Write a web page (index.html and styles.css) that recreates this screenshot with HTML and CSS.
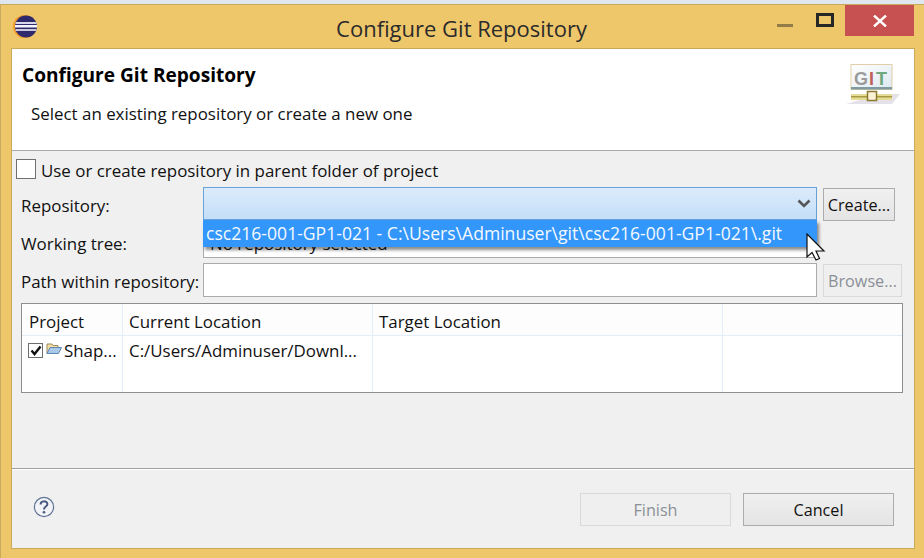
FILE: index.html
```html
<!DOCTYPE html>
<html lang="en">
<head>
<meta charset="utf-8">
<title>Configure Git Repository</title>
<link rel="stylesheet" href="styles.css">
</head>
<body>
<div class="window">
  <div class="titlebar">
    <svg class="app-icon" width="26" height="24" viewBox="0 0 26 24">
      <circle cx="11.5" cy="11.5" r="11.5" fill="#f39a2b"/>
      <circle cx="13" cy="11.5" r="11" fill="#2f2a6b"/>
      <rect x="2.5" y="7" width="21" height="2" fill="#d9d7e8"/>
      <rect x="2" y="10" width="22" height="2.5" fill="#f4f3fa"/>
      <rect x="2.5" y="14" width="21" height="2" fill="#c9c6de"/>
    </svg>
    <div class="title">Configure Git Repository</div>
    <div class="controls">
      <svg class="min" width="16" height="3"><rect width="16" height="3" fill="#927c47"/></svg>
      <svg class="max" width="18" height="14"><rect x="1.5" y="1.5" width="15" height="11" fill="none" stroke="#262626" stroke-width="3"/></svg>
      <div class="close">
        <svg width="14" height="12" viewBox="0 0 14 12"><path d="M1 0.5 L13 11.5 M13 0.5 L1 11.5" stroke="#fff" stroke-width="2.4"/></svg>
      </div>
    </div>
  </div>
  <div class="client">
    <header class="banner">
      <div class="banner-text">
        <h1>Configure Git Repository</h1>
        <p>Select an existing repository or create a new one</p>
      </div>
      <svg class="git-icon" width="62" height="42" viewBox="0 0 62 42">
        <defs><linearGradient id="panel" x1="0" y1="0" x2="1" y2="1"><stop offset="0" stop-color="#ffffff"/><stop offset="1" stop-color="#dde8f0"/></linearGradient></defs>
        <path d="M6 40 L52 40 L60 30 L40 30 Z" fill="#d8d4de" opacity=".7"/>
        <rect x="11" y="0.5" width="41" height="25" fill="url(#panel)" stroke="#e2cfa8"/>
        <rect x="11" y="23" width="41" height="2.5" fill="#7f9aa0"/>
        <text class="git-g" x="14" y="20.5">G</text><text class="git-i" x="29" y="20.5">I</text><text class="git-t" x="36" y="20.5">T</text>
        <rect x="11" y="30" width="41" height="6" fill="#e6dc96"/>
        <rect x="11" y="32" width="41" height="1.5" fill="#a89a45"/>
        <rect x="27.5" y="27.5" width="9" height="9" fill="#fbf3d8" stroke="#8c7a32" stroke-width="1.5"/>
      </svg>
    </header>
    <main class="content">
      <label class="check-row"><span class="checkbox"></span><span class="check-text">Use or create repository in parent folder of project</span></label>
      <div class="form">
        <span class="lbl">Repository:</span>
        <div class="combo">
          <svg width="14" height="9" viewBox="0 0 14 9"><path d="M1.5 1.5 L7 7 L12.5 1.5" fill="none" stroke="#555" stroke-width="2.6"/></svg>
        </div>
        <button class="btn create">Create...</button>
        <span class="lbl">Working tree:</span>
        <div class="field">No repository selected</div>
        <span></span>
        <span class="lbl">Path within repository:</span>
        <div class="field"></div>
        <button class="btn browse" disabled>Browse...</button>
        <div class="dropdown">csc216-001-GP1-021 - C:\Users\Adminuser\git\csc216-001-GP1-021\.git</div>
      </div>
      <div class="table">
        <div class="thead">
          <div class="col c1">Project</div>
          <div class="col c2">Current Location</div>
          <div class="col c3">Target Location</div>
          <div class="col c4"></div>
        </div>
        <div class="tbody">
          <div class="col c1 proj">
            <span class="tick"><svg width="12" height="11" viewBox="0 0 12 11"><path d="M1.5 5.5 L4.5 9 L10.5 1.5" fill="none" stroke="#111" stroke-width="2.4"/></svg></span>
            <svg class="folder" width="16" height="13" viewBox="0 0 16 13"><path d="M1 11.5 L1 2 L6 2 L7 3.5 L12 3.5 L12 5.5" fill="#f5dfa5" stroke="#9c8a5c"/><path d="M1 11.5 L4 5.5 L15.5 5.5 L12.5 11.5 Z" fill="#a9c8ea" stroke="#5f87b5"/></svg>
            <span>Shap...</span>
          </div>
          <div class="col c2">C:/Users/Adminuser/Downl...</div>
          <div class="col c3"></div>
          <div class="col c4"></div>
        </div>
      </div>
    </main>
    <footer class="footer">
      <svg class="help" width="22" height="22" viewBox="0 0 22 22">
        <circle cx="11" cy="11" r="9.6" fill="#f1f3f7" stroke="#5f7396" stroke-width="1.2"/>
        <path d="M7.6 8.4 C7.6 4.4 14.4 4.4 14.4 8.2 C14.4 10.6 11 10.6 11 13.4" fill="none" stroke="#46597f" stroke-width="2"/>
        <circle cx="11" cy="16.2" r="1.3" fill="#46597f"/>
      </svg>
      <div class="actions">
        <button class="btn wide" disabled>Finish</button>
        <button class="btn wide cancel">Cancel</button>
      </div>
    </footer>
  </div>
  <svg class="cursor" width="20" height="28" viewBox="0 0 20 28"><path d="M1 1 L1 24 L6 19.5 L10 27 L13.5 25.5 L10 18 L18 18 Z" fill="#fff" stroke="#111" stroke-width="1.2"/></svg>
</div>
</body>
</html>
```
FILE: styles.css
```css
* { box-sizing: border-box; }
html, body { margin: 0; height: 100%; }
body {
  width: 924px; height: 558px; overflow: hidden;
  background: #dfe6ee; padding-top: 4px;
  font-family: "Open Sans", "Noto Sans", sans-serif;
  font-size: 16.9px; color: #111;
}
.window {
  position: relative; height: 554px;
  background: #efc76b; border-top: 1px solid #c9a95c; border-left: 1px solid #c9a95c;
  display: flex; flex-direction: column;
  padding: 0 10px 9px 10px;
}
.titlebar { height: 43px; display: flex; align-items: center; position: relative; flex: none; margin-left: -10px; margin-right: -10px; }
.app-icon { position: absolute; left: 12px; top: 10px; }
.title { flex: 1; text-align: center; font-size: 22px; color: #2b2b2b; margin-top: 2px; padding-right: 2px; }
.controls { position: absolute; right: 10px; top: 0; display: flex; align-items: flex-start; }
.min { margin-top: 19px; margin-right: 23px; }
.max { margin-top: 8px; margin-right: 11px; }
.close { width: 69px; height: 31px; background: #c75050; display: flex; align-items: center; justify-content: center; }
.client {
  flex: 1; background: #f0f0f0; display: flex; flex-direction: column;
  border: 1px solid #c9a95c; border-width: 1px 0 1px 1px; box-shadow: 1px 0 0 #c9a95c;
  min-height: 0;
}
.banner {
  height: 102px; flex: none; background: #fff; border-bottom: 1px solid #a9a9a9;
  position: relative; padding: 14px 0 0 10px;
}
.banner h1 { margin: 0; font-size: 19.1px; font-weight: 700; color: #000; line-height: 25px; }
.banner p { margin: 14px 0 0 9px; font-size: 16.9px; line-height: 24px; }
.git-icon { position: absolute; right: 12px; top: 15px; }
.git-icon text { font-family: "Liberation Sans", sans-serif; font-weight: 700; font-size: 18px; }
.git-g { fill: #9a9a9a; } .git-i { fill: #c0605c; } .git-t { fill: #6fa77f; }
.content { flex: 1; padding: 7px 10px 0 4px; border-bottom: 1px solid #a0a0a0; box-shadow: 0 1px 0 #fff; min-height: 0; }
.check-row { display: flex; align-items: center; gap: 5px; height: 22px; line-height: 22px; }
.check-text { padding-top: 3px; }
.checkbox { width: 20px; height: 20px; background: #fff; border: 1px solid #707070; flex: none; }
.form {
  position: relative; margin: 7px 0 0 5px;
  display: grid; grid-template-columns: 182px 614px auto; row-gap: 5px;
  grid-template-rows: 33px 33px 34px; align-items: center;
}
.lbl { line-height: 22px; padding-top: 4px; }
.combo {
  height: 33px; border: 1px solid #68a0d8;
  background: linear-gradient(#dcebfb, #c4dff8);
  display: flex; align-items: center; justify-content: flex-end; padding-right: 5px;
}
.field {
  background: #fff; border: 1px solid #ababab; padding: 7px 0 0 6px; line-height: 22px; align-self: stretch; white-space: nowrap;
}
.btn {
  font: inherit; font-size: 16.2px; color: #111; background: linear-gradient(#f0f0f0, #e4e4e4); border: 1px solid #acacac; padding: 1px 0 0;
}
.btn:disabled { color: #8a8f96; background: #efefef; border-color: #d9d9d9; }
.create { width: 72px; height: 33px; margin: 1px 0 0 6px; align-self: start; }
.browse { width: 79px; height: 33px; margin-left: 6px; align-self: end; }
.dropdown {
  position: absolute; left: 182px; top: 33px; width: 614px; height: 27px;
  background: #3296fa; color: #f4f9ff; padding-left: 3px; line-height: 27px; white-space: nowrap; font-size: 17.58px;
  box-shadow: 2px 3px 3px rgba(0,0,0,.45);
}
.table {
  margin: 6px 0 0 5px; width: 882px; height: 90px; background: #fff; border: 1px solid #8e8e8e;
  display: flex; flex-direction: column;
}
.thead { display: flex; height: 32px; border-bottom: 1px solid #e3eefb; line-height: 35px; background: #fdfdfd; }
.tbody { display: flex; flex: 1; line-height: 30px; }
.col { border-right: 1px solid #e3eefb; padding-left: 6px; white-space: nowrap; }
.c1 { width: 101px; padding-left: 7px; } .c2 { width: 250px; } .c3 { width: 350px; } .c4 { flex: 1; border-right: 0; }
.proj { display: flex; align-items: flex-start; padding-left: 6px; gap: 3px; }
.tick {
  width: 15px; height: 15px; margin-top: 7px; background: #fff; border: 1px solid #6d6d6d;
  display: flex; align-items: center; justify-content: center; flex: none;
}
.folder { margin-top: 6px; flex: none; margin-right: -1px; }
.footer { height: 79px; flex: none; position: relative; display: flex; align-items: flex-start; padding: 24px 20px 0 21px; justify-content: space-between; }
.help { margin-top: 3px; }
.actions { display: flex; gap: 12px; }
.wide { width: 151px; height: 33px; }
.cursor { position: absolute; left: 805px; top: 228px; }
```
